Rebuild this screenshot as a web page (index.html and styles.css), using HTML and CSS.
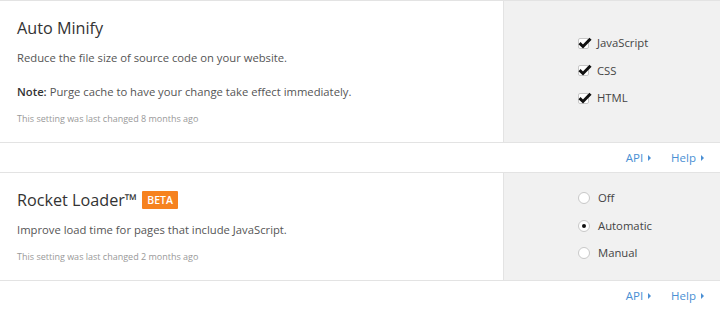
FILE: index.html
```html
<!DOCTYPE html>
<html lang="en">
<head>
    <meta charset="UTF-8">
    <title>Speed settings</title>
    <link rel="stylesheet" href="styles.css">
</head>
<body>
    <div class="setting">
        <div class="setting-body">
            <div class="setting-info">
                <h2 class="setting-title">Auto Minify</h2>
                <p class="setting-desc">Reduce the file size of source code on your website.</p>
                <p class="setting-desc note"><strong>Note:</strong> Purge cache to have your change take effect immediately.</p>
                <p class="setting-changed">This setting was last changed 8 months ago</p>
            </div>
            <div class="setting-control">
                <label class="option">
                    <span class="check">
                        <svg viewBox="0 0 14 12" width="14" height="12"><path d="M1.5 6.2 L5 9.5 L12.5 1.8" fill="none" stroke="#111" stroke-width="3" stroke-linejoin="miter"/></svg>
                    </span>
                    JavaScript
                </label>
                <label class="option">
                    <span class="check">
                        <svg viewBox="0 0 14 12" width="14" height="12"><path d="M1.5 6.2 L5 9.5 L12.5 1.8" fill="none" stroke="#111" stroke-width="3" stroke-linejoin="miter"/></svg>
                    </span>
                    CSS
                </label>
                <label class="option">
                    <span class="check">
                        <svg viewBox="0 0 14 12" width="14" height="12"><path d="M1.5 6.2 L5 9.5 L12.5 1.8" fill="none" stroke="#111" stroke-width="3" stroke-linejoin="miter"/></svg>
                    </span>
                    HTML
                </label>
            </div>
        </div>
        <div class="setting-footer">
            <a href="#">API <span class="arrow"></span></a>
            <a href="#">Help <span class="arrow"></span></a>
        </div>
    </div>

    <div class="setting">
        <div class="setting-body">
            <div class="setting-info">
                <h2 class="setting-title">Rocket Loader&trade; <span class="badge">BETA</span></h2>
                <p class="setting-desc">Improve load time for pages that include JavaScript.</p>
                <p class="setting-changed">This setting was last changed 2 months ago</p>
            </div>
            <div class="setting-control">
                <label class="option"><span class="radio"></span>Off</label>
                <label class="option"><span class="radio checked"></span>Automatic</label>
                <label class="option"><span class="radio"></span>Manual</label>
            </div>
        </div>
        <div class="setting-footer">
            <a href="#">API <span class="arrow"></span></a>
            <a href="#">Help <span class="arrow"></span></a>
        </div>
    </div>
</body>
</html>
```

FILE: styles.css
```css
/* Page */
body {
    margin: 0;
    font-family: "Open Sans", Arial, sans-serif;
    background: #fff;
    color: #555;
}

/* Setting card */
.setting {
    border-top: 1px solid #e3e3e3;
}
.setting-body {
    display: flex;
}
.setting-info {
    flex: 1;
    padding: 15px 17px 16px 17px;
}
.setting-title {
    margin: 0;
    font-size: 16.2px;
    font-weight: normal;
    line-height: 24px;
    color: #333;
    display: flex;
    align-items: center;
}
.setting-desc {
    margin: 9px 0 0;
    font-size: 11.25px;
    line-height: 18px;
    color: #555;
}
.setting-desc.note {
    margin-top: 16px;
}
.setting-desc strong {
    font-weight: 600;
    color: #333;
}
.setting-changed {
    margin: 11px 0 0;
    font-size: 9px;
    line-height: 14px;
    color: #999;
}
.badge {
    margin-left: 5px;
    background: #f6821f;
    color: #fff;
    font-size: 10.5px;
    font-weight: 600;
    line-height: 18px;
    padding: 0 5px;
    border-radius: 1px;
}

/* Controls panel */
.setting-control {
    width: 142px;
    padding: 0 0 2px 74px;
    background: #f1f1f1;
    border-left: 1px solid #e3e3e3;
    display: flex;
    flex-direction: column;
    justify-content: center;
    gap: 9.5px;
}
.option {
    display: flex;
    align-items: center;
    font-size: 11.3px;
    line-height: 18px;
    color: #444;
}
.check {
    position: relative;
    width: 9px;
    height: 9px;
    border: 1px solid #c8c8c8;
    border-radius: 2px;
    background: #fff;
    margin-right: 8px;
}
.check svg {
    position: absolute;
    left: -1px;
    top: -2px;
}
.radio {
    width: 10px;
    height: 10px;
    border: 1px solid #c8c8c8;
    border-radius: 50%;
    background: #fff;
    margin-right: 8px;
    display: flex;
    align-items: center;
    justify-content: center;
}
.radio.checked::after {
    content: "";
    width: 4px;
    height: 4px;
    border-radius: 50%;
    background: #111;
}

/* Footer links */
.setting-footer {
    border-top: 1px solid #e3e3e3;
    height: 29px;
    display: flex;
    justify-content: flex-end;
    align-items: center;
    gap: 20px;
    padding-right: 16px;
}
.setting-footer a {
    font-size: 11.5px;
    color: #4a8fd4;
    text-decoration: none;
    display: flex;
    align-items: center;
}
.arrow {
    margin-left: 5px;
    width: 0;
    height: 0;
    border-left: 3px solid #4a8fd4;
    border-top: 3px solid transparent;
    border-bottom: 3px solid transparent;
}
```
